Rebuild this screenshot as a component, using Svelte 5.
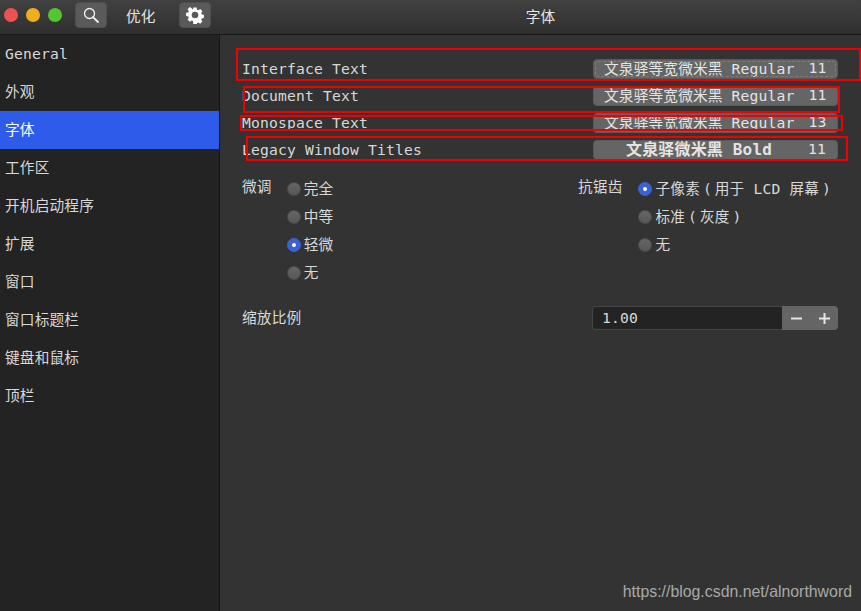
<script lang="ts">
  const navItems = ["General", "外观", "字体", "工作区", "开机启动程序", "扩展", "窗口", "窗口标题栏", "键盘和鼠标", "顶栏"];
  const activeNav = "字体";

  const fontRows = [
    { name: "Interface Text", label: "文泉驿等宽微米黑 Regular", size: 11, focused: true },
    { name: "Document Text", label: "文泉驿等宽微米黑 Regular", size: 11 },
    { name: "Monospace Text", label: "文泉驿等宽微米黑 Regular", size: 13 },
    { name: "Legacy Window Titles", label: "文泉驿微米黑 Bold", size: 11, bold: true }
  ];

  const hinting = ["完全", "中等", "轻微", "无"];
  const antialias = [["子像素", "(", "用于 LCD 屏幕", ")"], ["标准", "(", "灰度", ")"], ["无"]];
</script>

<div class="window">
  <header class="titlebar">
    <div class="lights">
      <span class="light red"></span>
      <span class="light yellow"></span>
      <span class="light green"></span>
    </div>
    <button class="tool search" type="button" aria-label="搜索">
      <svg width="18" height="18" viewBox="0 0 18 18" fill="none" stroke="#f2f2f2">
        <circle cx="7.5" cy="7.5" r="5" stroke-width="1.3" />
        <path d="M11 11.200l5 4.800" stroke-width="1.800" stroke-linecap="round" />
      </svg>
    </button>
    <span class="app-name">优化</span>
    <button class="tool gear" type="button" aria-label="设置">
      <svg width="18" height="18" viewBox="0 0 18 18">
        <path
          fill="#fff"
          fill-rule="evenodd"
          d="M7.4 1h3.2l.4 2.2 1.3.6 1.9-1.3 2.2 2.3-1.2 1.8.5 1.3 2.2.4v3.2l-2.2.4-.5 1.3 1.2 1.8-2.2 2.3-1.9-1.3-1.3.6-.4 2.2H7.4L7 14.6l-1.3-.6-1.9 1.3-2.2-2.3 1.2-1.8-.5-1.3L.1 9.5V6.3l2.2-.4.5-1.3L1.600 2.800 3.800 .5l1.900 1.300L7 3.200zM9 5.200a3.300 3.300 0 1 0 0 6.600 3.300 3.300 0 0 0 0-6.600z"
          transform="translate(0 .5)"
        />
      </svg>
    </button>
    <span class="page-title">字体</span>
  </header>

  <div class="body">
    <nav class="sidebar">
      {#each navItems as item}
        <div class="nav-item" class:active={item === activeNav}>{item}</div>
      {/each}
    </nav>

    <main class="content">
      <section class="font-rows">
        {#each fontRows as row}
          <div class="font-row">
            <span class="font-name">{row.name}</span>
            <button class="font-button" class:bold={row.bold} class:focused={row.focused} type="button">
              <span class="font-label">{row.label}</span>
              <span class="font-size">{row.size}</span>
            </button>
          </div>
        {/each}
      </section>

      <section class="options">
        <div class="option-group hinting">
          <span class="option-title">微调</span>
          <div class="radios">
            {#each hinting as option}
              <div class="radio-row">
                <span class="radio" class:checked={option === "轻微"}></span>
                <span class="radio-text">{option}</span>
              </div>
            {/each}
          </div>
        </div>
        <div class="option-group antialias">
          <span class="option-title">抗锯齿</span>
          <div class="radios">
            {#each antialias as parts, index}
              <div class="radio-row">
                <span class="radio" class:checked={index === 0}></span>
                <span class="radio-text">
                  {#each parts as part}
                    {#if part === "(" || part === ")"}<span class="paren">{part}</span>{:else}<span>{part}</span>{/if}
                  {/each}
                </span>
              </div>
            {/each}
          </div>
        </div>
      </section>

      <section class="scale-row">
        <span class="scale-label">缩放比例</span>
        <div class="spin">
          <span class="spin-value">1.00</span>
          <div class="spin-buttons">
            <svg width="13" height="13" viewBox="0 0 13 13" fill="#e6e6e6"><rect x="1" y="5.500" width="11" height="2" /></svg>
            <svg width="13" height="13" viewBox="0 0 13 13" fill="#e6e6e6"><path d="M5.500 1h2v4.500H12v2H7.500V12h-2V7.500H1v-2h4.500z" /></svg>
          </div>
        </div>
      </section>
    </main>
  </div>

  <!-- annotations drawn over the screenshot -->
  <span class="mark mark-1"></span>
  <span class="mark mark-2"></span>
  <span class="mark mark-3"></span>
  <span class="mark mark-4"></span>
  <span class="watermark">https://blog.csdn.net/alnorthword</span>
</div>

<style>
  :global(body) {
    margin: 0;
    background: #333;
  }

  .window {
    position: relative;
    width: 861px;
    height: 611px;
    overflow: hidden;
    display: flex;
    flex-direction: column;
    background: #333;
    color: #d8d8d8;
    font-family: "DejaVu Sans Mono", "Noto Sans CJK SC", monospace;
    font-size: 14.67px;
    letter-spacing: 0.17px;
  }

  .titlebar {
    box-sizing: border-box;
    flex: 0 0 35px;
    display: flex;
    align-items: center;
    padding: 0 0 4px 4px;
    background: linear-gradient(#414141, #2f2f2f);
    border-bottom: 1px solid #1a1a1a;
  }

  .lights {
    display: flex;
    gap: 8px;
  }

  .light {
    width: 14px;
    height: 14px;
    border-radius: 50%;
  }

  .red { background: #ee5151; }
  .yellow { background: #f1ae1b; }
  .green { background: #52c732; }

  .tool {
    box-sizing: border-box;
    flex: 0 0 32px;
    height: 26px;
    padding: 0;
    display: flex;
    align-items: center;
    justify-content: center;
    border: 1px solid #4e4e4e;
    border-radius: 4px;
    background: #5a5a5a;
  }

  .search {
    margin-left: 13px;
  }

  .gear {
    margin-left: 24px;
  }

  .app-name {
    margin-left: 19px;
    width: 29px;
    color: #e6e6e6;
    white-space: nowrap;
  }

  .page-title {
    position: absolute;
    left: 220px;
    right: 0;
    top: 5px;
    text-align: center;
    color: #e6e6e6;
  }

  .body {
    flex: 1;
    display: flex;
    min-height: 0;
  }

  .sidebar {
    box-sizing: border-box;
    flex: 0 0 220px;
    background: #232323;
    border-right: 1px solid #151515;
  }

  .nav-item {
    height: 38px;
    padding-left: 5px;
    line-height: 38px;
    color: #d8d8d8;
  }

  .nav-item.active {
    background: #2f5bea;
    color: #fff;
  }

  .content {
    flex: 1;
    min-width: 0;
    box-sizing: border-box;
    padding: 24px 23px 0 22px;
  }

  .font-rows {
    display: flex;
    flex-direction: column;
    gap: 7px;
  }

  .font-row {
    display: flex;
    align-items: center;
    justify-content: space-between;
    height: 20px;
  }

  .font-name {
    padding-bottom: 2px;
  }

  .font-button {
    box-sizing: border-box;
    width: 245px;
    height: 20px;
    display: flex;
    align-items: center;
    gap: 14px;
    padding: 0 11px 4px 10px;
    position: relative;
    border: 1px solid #5a5a5a;
    border-radius: 4px;
    background: #656565;
    color: #e4e4e4;
    font: inherit;
    letter-spacing: inherit;
  }

  .font-button.focused::after {
    content: "";
    position: absolute;
    inset: 1px;
    border: 1px dashed #7c7c7c;
    border-radius: 3px;
  }

  .font-label {
    flex: 1;
    text-align: center;
    white-space: nowrap;
  }

  .font-size {
    width: 18px;
    text-align: right;
  }

  .font-button.bold .font-label {
    font-size: 16px;
    font-weight: 700;
  }

  .options {
    display: flex;
    margin-top: 19px;
  }

  .option-group {
    display: flex;
    align-items: flex-start;
  }

  .hinting {
    width: 336px;
    gap: 15px;
  }

  .antialias {
    gap: 16px;
  }

  .radios {
    display: flex;
    flex-direction: column;
    gap: 8px;
    white-space: pre;
  }

  .option-title {
    line-height: 20px;
    margin-top: -2px;
  }

  .radio-row {
    display: flex;
    align-items: center;
    gap: 3px;
    height: 20px;
  }

  .radio-text {
    display: flex;
    align-items: baseline;
    padding-bottom: 4px;
  }

  .paren {
    width: 14.84px;
    text-align: center;
  }

  .radio {
    box-sizing: border-box;
    width: 14px;
    height: 14px;
    display: flex;
    align-items: center;
    justify-content: center;
    border-radius: 50%;
    background: linear-gradient(#666, #565656);
    border: 1px solid #4c4c4c;
  }

  .radio.checked {
    background: #3a62d8;
    border-color: #3a62d8;
  }

  .radio.checked::after {
    content: "";
    width: 4px;
    height: 4px;
    border-radius: 50%;
    background: #fff;
  }

  .scale-row {
    display: flex;
    align-items: center;
    justify-content: space-between;
    margin-top: 23px;
    height: 24px;
  }

  .scale-label {
    padding-bottom: 4px;
  }

  .spin {
    box-sizing: border-box;
    width: 246px;
    height: 24px;
    display: flex;
  }

  .spin-value {
    box-sizing: border-box;
    flex: 1;
    padding-left: 9px;
    line-height: 22px;
    background: #232323;
    border: 1px solid #454545;
    border-right: 0;
    border-radius: 4px 0 0 4px;
    color: #d8d8d8;
  }

  .spin-buttons {
    box-sizing: border-box;
    width: 56px;
    display: flex;
    align-items: center;
    justify-content: space-between;
    padding: 0 7px 0 8px;
    background: #656565;
    border-radius: 0 4px 4px 0;
  }

  .mark {
    position: absolute;
    box-sizing: border-box;
    border: 2px solid #f00000;
  }

  .mark-1 { left: 236px; top: 48px; width: 625px; height: 33px; }
  .mark-2 { left: 243px; top: 86px; width: 597px; height: 27px; }
  .mark-3 { left: 240px; top: 115px; width: 603px; height: 16px; }
  .mark-4 { left: 246px; top: 136px; width: 602px; height: 25px; }

  .watermark {
    position: absolute;
    right: 9px;
    top: 583px;
    font-family: "Liberation Sans", Arial, sans-serif;
    font-size: 15.86px;
    letter-spacing: 0;
    color: #a8a8a8;
  }
</style>
